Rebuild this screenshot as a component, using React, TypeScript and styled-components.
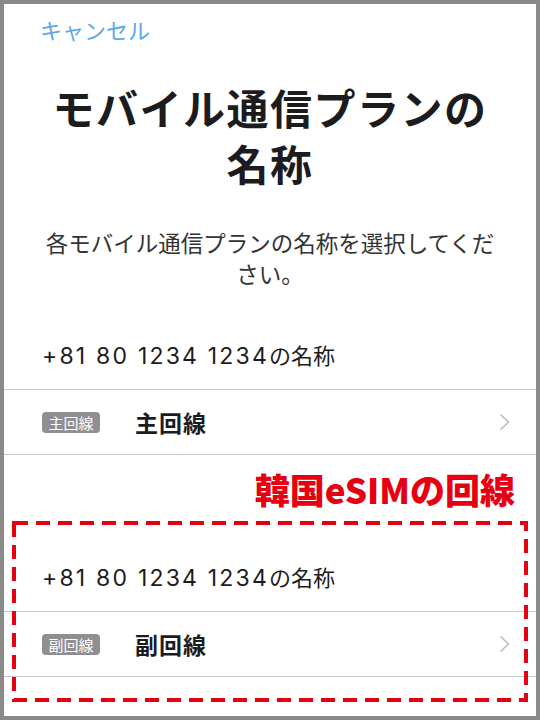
import React from "react";
import styled, { createGlobalStyle } from "styled-components";

const GlobalStyle = createGlobalStyle`
  html, body {
    margin: 0;
    padding: 0;
    background: #ffffff;
  }
  body {
    font-family: "Noto Sans CJK JP", "Noto Sans", sans-serif;
  }
`;

const Frame = styled.div`
  width: 540px;
  height: 720px;
  box-sizing: border-box;
  border: 4px solid #8a8a8a;
  background: #ffffff;
  overflow: hidden;
  display: flex;
  flex-direction: column;
`;

const CancelButton = styled.div`
  padding: 10px 0 0 36px;
  font-size: 22px;
  line-height: 30px;
  color: #5aa8e8;
`;

const Title = styled.h1`
  margin: 35px 0 0;
  text-align: center;
  font-size: 42px;
  line-height: 56px;
  font-weight: 700;
  color: #1c1c1e;
  letter-spacing: 1.5px;
`;

const Subtitle = styled.p`
  margin: 36px 40px 0;
  text-align: center;
  font-size: 22.5px;
  line-height: 31px;
  color: #333333;
`;

const Section = styled.div<{ $top: number }>`
  margin-top: ${(p) => p.$top}px;
  display: flex;
  flex-direction: column;
`;

const SectionHeader = styled.div`
  height: 30px;
  padding: 20px 0 20px 38px;
  font-size: 22px;
  line-height: 30px;
  color: #1c1c1e;
  border-bottom: 1px solid #c8c8cc;
  white-space: nowrap;
`;

const PhoneNumber = styled.span`
  font-family: Inter, "Noto Sans", sans-serif;
  font-size: 23px;
  line-height: 30px;
  letter-spacing: 2.2px;
`;

const Row = styled.div`
  height: 64px;
  display: flex;
  align-items: center;
  padding: 0 26px 0 38px;
  border-bottom: 1px solid #c8c8cc;
`;

const Badge = styled.span`
  width: 58px;
  height: 21px;
  border-radius: 4px;
  background: #8e8e93;
  color: #ffffff;
  font-size: 15px;
  line-height: 21px;
  text-align: center;
  flex-shrink: 0;
`;

const RowLabel = styled.span`
  margin-left: 35px;
  flex: 1;
  font-size: 23px;
  letter-spacing: 1px;
  font-weight: 700;
  color: #1c1c1e;
`;

const Chevron = styled.svg`
  width: 11px;
  height: 18px;
  flex-shrink: 0;
`;

const Annotated = styled.div`
  position: relative;
`;

const AnnotationLabel = styled.div`
  position: absolute;
  right: 21px;
  top: -72px;
  font-size: 35px;
  line-height: 40px;
  font-weight: 900;
  color: #e60012;
  white-space: nowrap;
`;

const DashedBox = styled.svg`
  position: absolute;
  left: 8px;
  top: -20px;
  width: calc(100% - 16px);
  height: calc(100% + 45px);
  overflow: visible;
  pointer-events: none;
`;

const ChevronIcon = () => (
  <Chevron viewBox="0 0 11 18">
    <polyline
      points="1.5,1.5 9.5,9 1.5,16.5"
      fill="none"
      stroke="#b8b8bd"
      strokeWidth="1.5"
      strokeLinejoin="round"
    />
  </Chevron>
);

const LineBlock = ({ number, badge }: { number: string; badge: string }) => (
  <>
    <SectionHeader>
      <PhoneNumber>{number}</PhoneNumber>の名称
    </SectionHeader>
    <Row>
      <Badge>{badge}</Badge>
      <RowLabel>{badge}</RowLabel>
      <ChevronIcon />
    </Row>
  </>
);

export default function App() {
  return (
    <>
      <GlobalStyle />
      <Frame>
        <CancelButton>キャンセル</CancelButton>
        <Title>
          モバイル通信プランの
          <br />
          名称
        </Title>
        <Subtitle>各モバイル通信プランの名称を選択してください。</Subtitle>
        <Section $top={30}>
          <LineBlock number="+81 80 1234 1234" badge="主回線" />
        </Section>
        <Section $top={86}>
          <Annotated>
            <AnnotationLabel>韓国eSIMの回線</AnnotationLabel>
            <LineBlock number="+81 80 1234 1234" badge="副回線" />
            <DashedBox>
              <rect
                x="2"
                y="2"
                width="calc(100% - 4px)"
                height="calc(100% - 4px)"
                fill="none"
                stroke="#e60012"
                strokeWidth="4"
                strokeDasharray="14 8"
              />
            </DashedBox>
          </Annotated>
        </Section>
      </Frame>
    </>
  );
}
